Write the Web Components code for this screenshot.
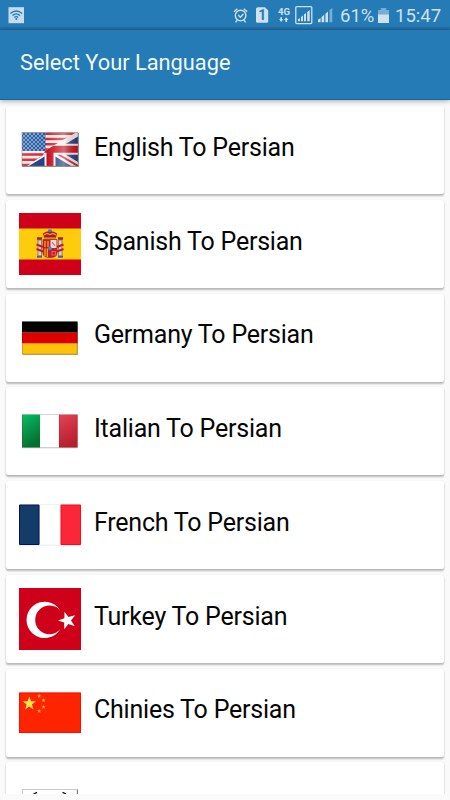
<!DOCTYPE html>
<html lang="en">
  <head>
    <meta charset="UTF-8" />
    <meta name="viewport" content="width=device-width, initial-scale=1.0" />
    <title>Select Your Language</title>
    <style>
      body {
        margin: 0;
        height: 800px;
        overflow: hidden;
        background: #fafafa;
        font-family: Roboto, "Liberation Sans", sans-serif;
      }
    </style>
  </head>
  <body>
    <language-screen></language-screen>

    <template id="status-bar">
      <style>
        :host {
          display: flex;
          align-items: center;
          box-sizing: border-box;
          height: 30px;
          padding: 1px 9px 0 8px;
          color: #cee1ef;
          background: linear-gradient(#257bb6 26px, #236fa4 28px, #20679b 30px);
          font-size: 18.5px;
          line-height: 30px;
        }
        svg {
          display: block;
          flex: none;
        }
        .space {
          flex: 1;
        }
        .battery {
          width: 34px;
          margin: 0 4px 0 7px;
          white-space: nowrap;
        }
        .time {
          width: 46px;
          margin-left: 6px;
          white-space: nowrap;
        }
      </style>
      <svg width="17" height="30" viewBox="0 0 17 30">
        <rect x=".5" y="6.2" width="15.5" height="16" fill="#c4dcec" />
        <g fill="none" stroke="#257bb6" stroke-width="1.3">
          <path d="M2.4 12.6Q8.3 7.4 14.2 12.6" />
          <path d="M4.5 14.6Q8.3 11.2 12.1 14.6" />
          <path d="M6.4 16.5Q8.3 14.8 10.2 16.5" />
        </g>
        <circle cx="8.3" cy="18" r="1" fill="#257bb6" />
      </svg>
      <span class="space"></span>
      <svg width="22" height="30" viewBox="232 0 22 30" fill="none" stroke="#cee1ef" stroke-width="1.4">
        <circle cx="240.6" cy="14.6" r="5.3" />
        <path d="M234 10.8L237.4 7.7M243.8 7.7L247.2 10.8M237.2 19.2L235.6 21.4M244 19.2L245.6 21.4M238.2 14L240.4 16.2L243.4 13" />
      </svg>
      <svg width="22" height="30" viewBox="254 0 22 30">
        <path d="M258 6.3H265L268.2 9.5V20.3Q268.2 21.8 266.7 21.8H257.8Q256 21.8 256 20.3V7.8Q256 6.3 258 6.3Z" fill="#cee1ef" />
        <text x="258.3" y="19" font-size="14" font-weight="700" fill="#257bb6">1</text>
      </svg>
      <svg width="18" height="30" viewBox="276 0 18 30" fill="#cee1ef">
        <text x="278" y="14" font-size="9.5" font-weight="700">4G</text>
        <path d="M280.3 16.2H282V18.2H283.3L281.2 21L279 18.2H280.3ZM285.4 21V19H284L286.2 16.2L288.4 19H287.1V21Z" />
      </svg>
      <svg width="22" height="30" viewBox="294 0 22 30">
        <rect x="295.8" y="5.6" width="16" height="17" rx="1" fill="none" stroke="#cee1ef" stroke-width="1.3" />
        <path d="M298 20.2V18.2L300 17V20.2ZM301 20.2V16L303 14.6V20.2ZM304 20.2V13.5L306 12V20.2ZM307.2 20.2V11L309.7 9V20.2Z" fill="#cee1ef" />
      </svg>
      <svg width="17" height="30" viewBox="316 0 17 30" fill="#cee1ef">
        <path d="M318 21.3V18.8L320.6 17V21.3ZM321.6 21.3V16L324.2 13.8V21.3ZM325.4 21.3V12.7L328 10.6V21.3Z" />
        <path d="M329.5 21.3V9L332.3 7V21.3Z" opacity=".5" />
      </svg>
      <span class="battery">61%</span>
      <svg width="11" height="30" viewBox="377 0 11 30" fill="#cee1ef">
        <path d="M377 9H379.8V7H385.2V9H388V13.3H377Z" opacity=".5" />
        <path d="M377 13.3H388V22H377Z" />
      </svg>
      <span class="time">15:47</span>
    </template>

    <template id="tool-bar">
      <style>
        :host {
          display: flex;
          align-items: center;
          position: relative;
          box-sizing: border-box;
          height: 70px;
          padding: 0 20px 5px;
          color: #f2f8fc;
          background: #257bb6;
          border-bottom: 1px solid #1068a6;
          box-shadow: 0 1px 5px rgba(0, 0, 0, 0.35);
          font-size: 21.8px;
          white-space: nowrap;
        }
      </style>
      <span><slot></slot></span>
    </template>

    <template id="language-card">
      <style>
        :host {
          display: flex;
          flex: none;
          align-items: center;
          gap: 13px;
          box-sizing: border-box;
          height: 88px;
          padding: 0 12px 0 13px;
          color: #060606;
          background: #fff;
          border-radius: 2px;
          box-shadow: 0 2px 2px rgba(0, 0, 0, 0.26), 0 0 1px rgba(0, 0, 0, 0.16);
          font-size: 25px;
          letter-spacing: -0.22px;
        }
        .label {
          padding-bottom: 5.5px;
          white-space: nowrap;
        }
      </style>
      <slot name="flag"></slot>
      <span class="label"><slot></slot></span>
    </template>

    <template id="language-screen">
      <style>
        :host {
          display: block;
        }
        .list {
          display: flex;
          flex-direction: column;
          gap: 5.75px;
          box-sizing: border-box;
          height: 694px;
          padding: 6px 6px 0;
          overflow: hidden;
        }
      </style>
      <status-bar></status-bar>
      <tool-bar>Select Your Language</tool-bar>
      <div class="list">
        <language-card><country-flag slot="flag" code="en"></country-flag>English To Persian</language-card>
        <language-card><country-flag slot="flag" code="es"></country-flag>Spanish To Persian</language-card>
        <language-card><country-flag slot="flag" code="de"></country-flag>Germany To Persian</language-card>
        <language-card><country-flag slot="flag" code="it"></country-flag>Italian To Persian</language-card>
        <language-card><country-flag slot="flag" code="fr"></country-flag>French To Persian</language-card>
        <language-card><country-flag slot="flag" code="tr"></country-flag>Turkey To Persian</language-card>
        <language-card><country-flag slot="flag" code="cn"></country-flag>Chinies To Persian</language-card>
        <language-card><country-flag slot="flag" code="kr"></country-flag></language-card>
      </div>
    </template>

    <script>
      // every flag is drawn on a 62 x 62 square
      const flags = {
        en: `
          <defs>
            <clipPath id="us"><path d="M3 13.5H57L42 22L26 32L24 36L8 47H3Z" /></clipPath>
            <clipPath id="box"><rect x="3" y="13.5" width="56" height="33.5" /></clipPath>
            <linearGradient id="shine" x2="1" y2="0">
              <stop offset="0" stop-color="#fff" stop-opacity=".1" />
              <stop offset=".45" stop-color="#fff" stop-opacity="0" />
              <stop offset=".75" stop-color="#fff" stop-opacity=".38" />
              <stop offset="1" stop-color="#400" stop-opacity=".12" />
            </linearGradient>
            <pattern id="stars" width="4" height="4" patternUnits="userSpaceOnUse">
              <circle cx="1" cy="1" r=".75" fill="#fff" />
              <circle cx="3" cy="3" r=".75" fill="#fff" />
            </pattern>
          </defs>
          <rect x="3" y="14" width="57" height="34" fill="#999" />
          <g clip-path="url(#box)">
            <path d="M3 13.5H59V47H3Z" fill="#203c85" />
            <path d="M3 13.5L59 47M3 47L59 13.5" stroke="#f4f4f4" stroke-width="7" />
            <path d="M37 34L59 47M26 34L5 47" stroke="#d1202c" stroke-width="2" />
            <path d="M31 13.5V47M3 30.2H59" stroke="#f4f4f4" stroke-width="11" />
            <path d="M31 13.5V47M3 30.2H59" stroke="#c5101d" stroke-width="7" />
            <g clip-path="url(#us)">
              <path d="M3 13.5H59V47H3Z" fill="#f4eeee" />
              <path d="M3 14.8H59M3 20H59M3 25.2H59M3 30.4H59M3 35.6H59M3 40.8H59M3 46H59" stroke="#d8232f" stroke-width="2.5" />
              <path d="M3 13.5H26.5V32H3Z" fill="#2259a4" />
              <path d="M3 13.5H26.5V32H3Z" fill="url(#stars)" />
            </g>
            <path d="M3 13.5H59V47H3Z" fill="url(#shine)" />
          </g>
          <rect x="3" y="13.5" width="56" height="33.5" fill="none" stroke="#777" stroke-opacity=".6" stroke-width=".8" />`,
        es: `
          <path d="M0 0H62V62H0Z" fill="#cf0019" />
          <path d="M0 15.5H62V46.5H0Z" fill="#ffcc0d" />
          <g fill="#d8d4d0" stroke="#8b6a5c" stroke-width=".8">
            <path d="M19 27H22.5V43H19ZM39.5 27H43V43H39.5Z" />
          </g>
          <path d="M18 25.5H23M39 25.5H44" stroke="#a81c2c" stroke-width="2.6" />
          <path d="M18 43.8H23M39 43.8H44" stroke="#3f64a8" stroke-width="2" />
          <path d="M17.5 31.5L24 34M17.5 36L24 38.5M44.5 31.5L38 34M44.5 36L38 38.5" stroke="#c51827" stroke-width="2" />
          <path d="M24 26.5H38V40Q38 44.5 31 44.5Q24 44.5 24 40Z" fill="#c91b28" stroke="#8b2e2b" stroke-width=".7" />
          <path d="M31.5 27H37.5V35H31.5Z" fill="#eed9de" />
          <path d="M26 35.5V43M28.3 35.5V44M26 28V34M29 28V34" stroke="#f3b21d" stroke-width="1.2" />
          <path d="M33 29L36 33M33 38.5H36.5V42H33Z" stroke="#d8606e" stroke-width="1.2" fill="none" />
          <circle cx="31" cy="35.4" r="1.8" fill="#2f97cf" />
          <path d="M25.5 25.5L23.8 20.5Q27 18 31 18Q35 18 38.2 20.5L36.5 25.5Z" fill="#b31624" />
          <path d="M25 22L28 20.5L31 21.5L34 20.5L37 22M25.5 25H36.5" stroke="#e5a52c" stroke-width="1.2" fill="none" />
          <path d="M29.2 16.5H32.8V19H29.2Z" fill="#3978b8" />`,
        de: `
          <path d="M4 15.5H59V48H4Z" fill="#a5a5a5" />
          <path d="M3 14.5H58.5V25.5H3Z" fill="#000" />
          <path d="M3 25.5H58.5V36.5H3Z" fill="#dc0000" />
          <path d="M3 36.5H58.5V47.5H3Z" fill="#ffc20a" />
          <path d="M3.4 14.9H58.1V47.1H3.4Z" fill="none" stroke="#000" stroke-opacity=".2" />`,
        it: `
          <defs>
            <linearGradient id="green" x2=".4" y2="1"><stop stop-color="#04bf66" /><stop offset="1" stop-color="#04702f" /></linearGradient>
            <linearGradient id="red" x2=".3" y2="1"><stop stop-color="#e54354" /><stop offset="1" stop-color="#b81f2e" /></linearGradient>
          </defs>
          <path d="M3 14H58.8V48.2H3Z" fill="#c4c4c4" />
          <path d="M3 14.7H21V47.5H3Z" fill="url(#green)" />
          <path d="M21 14.7H40V47.2H21Z" fill="#fff" />
          <path d="M40 14.7H58.5V47.5H40Z" fill="url(#red)" />
          <path d="M3.5 15V47M40.4 15V47M58 15V47" stroke="#a41428" stroke-opacity=".3" />`,
        fr: `
          <path d="M0 10.5H62V51.5H0Z" fill="#e3e3e8" />
          <path d="M.5 11H20V50.5H.5Z" fill="#143c69" stroke="#08105a" />
          <path d="M21 11H41.5V50.8H21Z" fill="#fff" />
          <path d="M42 11H61.5V50.5H42Z" fill="#fb2638" stroke="#fb0a18" />`,
        tr: `
          <path d="M0 0H62V62H0Z" fill="#cf0019" />
          <path d="M41.3 22.5A18.2 18.2 0 1 0 41.3 41.3A14.3 14.3 0 1 1 41.3 22.5Z" fill="#fff" />
          <path d="M39 32.4L45.4 30.3L45.5 23.7L49.4 29.1L56.2 27.2L52 32.5L55.8 38.2L49.4 35.9L45.2 41.3L45.2 34.5Z" fill="#fff" />`,
        cn: `
          <path d="M0 10.5H62V51H0Z" fill="#fe2400" />
          <path d="M.5 11H61.5V50.5H.5Z" fill="none" stroke="#f50000" stroke-opacity=".6" />
          <path d="M10.3 14.6L12 19.2L16.8 19.3L13 22.4L14.4 27.4L10.3 24.5L6.1 27.4L7.6 22.4L3.8 19.3L8.6 19.2Z" fill="#ffe642" />
          <g fill="#ffb52c">
            <path id="s" d="M20.2 12L20.8 13.3L22.2 13.4L21.1 14.3L21.5 15.8L20.2 15L18.9 15.8L19.3 14.3L18.2 13.4L19.6 13.3Z" />
            <use href="#s" x="4.3" y="4.2" />
            <use href="#s" x="4.3" y="11" />
            <use href="#s" x="0" y="15" />
          </g>`,
        kr: `
          <path d="M3.5 14.5H58.2V48H3.5Z" fill="#fff" stroke="#c9c9c9" />
          <path d="M58.5 14.5V48" stroke="#777" />
          <path d="M14.5 19L18 17.3M43.5 17.3L47 19" stroke="#111" stroke-width="1.3" />`,
      }

      class TemplateElement extends HTMLElement {
        constructor() {
          super()
          const template = document.querySelector("template#" + this.localName)
          this.attachShadow({ mode: "open" }).appendChild(template.content.cloneNode(true))
        }
      }

      customElements.define("status-bar", class extends TemplateElement {})
      customElements.define("tool-bar", class extends TemplateElement {})
      customElements.define("language-card", class extends TemplateElement {})

      customElements.define(
        "country-flag",
        class extends HTMLElement {
          connectedCallback() {
            if (this.shadowRoot) return
            const shadow = this.attachShadow({ mode: "open" })
            shadow.innerHTML = `
              <style>
                :host { display: block; flex: none; width: 62px; height: 62px; }
                svg { display: block; }
              </style>
              <svg width="62" height="62" viewBox="0 0 62 62">${flags[this.getAttribute("code")]}</svg>`
          }
        }
      )

      customElements.define("language-screen", class extends TemplateElement {})
    </script>
  </body>
</html>
